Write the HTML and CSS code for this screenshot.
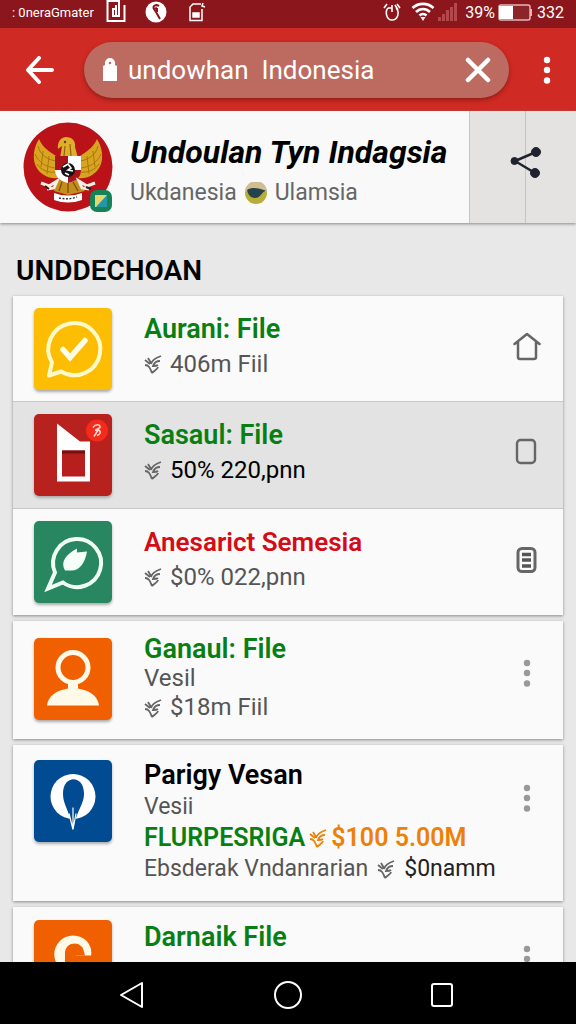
FILE: index.html
```html
<!DOCTYPE html>
<html lang="id">
<head>
<meta charset="utf-8">
<meta name="viewport" content="width=device-width, initial-scale=1">
<title>undowhan Indonesia</title>
<link rel="stylesheet" href="styles.css">
</head>
<body>
<svg class="defs" aria-hidden="true">
  <symbol id="sprig" viewBox="0 0 18 20">
    <path d="M1 6l5 4M4 4l3 5M17 2C11 4 8 6 7 10M1 11c4 0 5 3 7 8M16 7c-4 0-6 2-7 5 3 0 4 0 5-1M14 13c0 2-3 3-6 6" fill="none" stroke="currentColor" stroke-width="1.800"/>
  </symbol>
  <symbol id="dots" viewBox="0 0 8 28">
    <circle cx="4" cy="4" r="3.2"/><circle cx="4" cy="14" r="3.2"/><circle cx="4" cy="24.500" r="3.2"/>
  </symbol>
</svg>

<div class="status">
  <span class="carrier">: 0neraGmater</span>
  <svg class="status-doc" width="20" height="24" viewBox="0 0 20 24" fill="none" stroke="#fff" stroke-width="2"><path d="M12 21H1.500V1H13V16H7V9H10M18.500 5V21H12M10 5V16"/></svg>
  <svg class="status-round" width="22" height="22" viewBox="0 0 22 22"><circle cx="11" cy="11" r="10.500" fill="#fff"/><path d="M14 5c-3-2-7 0-5 3l3-1M9 8l2 3 4 7M12 7v4" fill="none" stroke="#8b161b" stroke-width="2"/></svg>
  <svg class="status-card" width="18" height="20" viewBox="0 0 18 20" fill="none" stroke="#fff" stroke-width="1.500"><path d="M14 7V18.500H2V5L5 2H13M15 1l-1 3 3 1"/><path d="M5 11h6v4H5z" fill="#fff"/></svg>
  <span class="spacer"></span>
  <svg width="18" height="20" viewBox="0 0 18 20" fill="none" stroke="#fff" stroke-width="1.600"><path d="M5 6C2 9 3 18 9 18s8-8 4-12M5 6h4M9 3v7M1 6l3-4M14 2l3 4M12 3l3 5"/></svg>
  <svg class="wifi" width="24" height="20" viewBox="0 0 24 20" fill="none" stroke="#fff" stroke-width="2.600"><path d="M1.500 6c6-5.500 15-5.500 21 0M5 10c4-4 10-4 14 0M8.500 13.500c2-2 5-2 7 0"/><path d="M9.500 15h5L12 19z" fill="#fff" stroke="none"/></svg>
  <svg width="20" height="18" viewBox="0 0 20 18" fill="#b4474b"><path d="M0 14h3v4H0zM4 11h3v7H4zM8 7h3v11H8zM12 4h3v14h-3zM16 0h3v18h-3z"/></svg>
  <span class="level">39%</span>
  <svg width="34" height="17" viewBox="0 0 34 17"><rect x="1" y="1" width="31" height="15" rx="2" fill="#8b2529" stroke="#e8b5b5" stroke-width="1.500"/><path d="M1 2h14v13H1z" fill="#fff"/><path d="M33 5v7" stroke="#e8b5b5" stroke-width="2"/></svg>
  <span class="clock">332</span>
</div>

<header class="appbar">
  <button class="bare" aria-label="Back"><svg width="28" height="28" viewBox="0 0 28 28" fill="none" stroke="#fff" stroke-width="4" stroke-linecap="round" stroke-linejoin="round"><path d="M13 2L2 14l11 12M3 14h23"/></svg></button>
  <form class="search">
    <svg width="16" height="24" viewBox="0 0 16 24"><path d="M3 7V5a5 5 0 0 1 10 0v2l2 1v15H1V8z" fill="#fff"/><circle cx="8" cy="5" r="1.300" fill="#bd6b60"/></svg>
    <input type="text" aria-label="Address" value="undowhan  Indonesia">
    <button type="button" class="bare" aria-label="Clear"><svg width="26" height="26" viewBox="0 0 26 26" stroke="#fff" stroke-width="4.500" stroke-linecap="round"><path d="M3 3l20 20M23 3L3 23"/></svg></button>
  </form>
  <button class="bare more" aria-label="More"><svg width="8" height="28" fill="#fff"><use href="#dots"/></svg></button>
</header>

<section class="profile">
  <div class="profile-main">
    <div class="avatar">
      <svg width="90" height="92" viewBox="0 0 90 92">
        <circle cx="45" cy="45" r="44.500" fill="#b91218"/>
        <path d="M16 17c-8 13-7 29 5 36 6 4 13 4 18 2l4-20c-6 1-9 0-13-3-6-4-11-8-14-15zM74 17c8 13 7 29-5 36-6 4-13 4-18 2l-4-20c6 1 9 0 13-3 6-4 11-8 14-15z" fill="#d9a520"/>
        <path d="M15 24c2 9 10 14 18 15M12 32c3 8 11 13 20 14M14 42c4 6 11 9 19 8M75 24c-2 9-10 14-18 15M78 32c-3 8-11 13-20 14M76 42c-4 6-11 9-19 8M20 29l-2 16M26 34l-2 18M70 29l2 16M64 34l2 18" fill="none" stroke="#a8770f" stroke-width="1"/>
        <path d="M37 36l2-12-4 3c-1-7 3-12 8-12 6 0 10 4 9 10l3 11z" fill="#dfae2c"/><circle cx="42" cy="20" r="1.200" fill="#5e3a08"/>
        <path d="M42 24l-1 10M47 22l1 12" stroke="#94640f" stroke-width="1.200"/>
        <path d="M36 57h18l8 12-17 4-14-4z" fill="#c58e1c"/><path d="M39 60l-3 9M45 60v11M50 60l5 9" stroke="#76500e" stroke-width="1.300"/>
        <path d="M32 34h26v13c0 8-5 12-13 14-8-2-13-6-13-14z" fill="#fff"/>
        <path d="M32 34h13v14H32zM45 48h13c0 8-5 11-13 13z" fill="#a91319"/>
        <circle cx="45" cy="48" r="7" fill="#171113"/><path d="M40 45l5-3 3 4-3 2 5 1M42 51l4 2" stroke="#fff" stroke-width="1.600" fill="none"/>
        <path d="M18 61l8 3 8-5-3 7-7 1M72 61l-8 3-8-5 3 7 7 1" fill="none" stroke="#f5eee5" stroke-width="3"/>
        <path d="M22 64l4 3M63 65l5 2" stroke="#222" stroke-width="2"/>
        <path d="M31 71q14 5 28 0v7q-14 5-28 0z" fill="#fff"/><path d="M36 76q9 2 18-1" stroke="#333" stroke-width="1.500" stroke-dasharray="2 1.500" fill="none"/>
      </svg>
      <svg class="badge" width="24" height="24" viewBox="0 0 24 24"><rect x="1" y="1" width="22" height="22" rx="7" fill="#16825a"/><path d="M6 6h12v12H6z" fill="#2397a5"/><path d="M6 6h12L7 18H6z" fill="#e6d76d"/></svg>
    </div>
    <div class="profile-text">
      <h1>Undoulan Tyn Indagsia</h1>
      <p>Ukdanesia <svg width="22" height="22" viewBox="0 0 22 22"><circle cx="11" cy="11" r="11" fill="#b9ad37"/><path d="M0 10a11 11 0 0 1 22 0l-5-2H5z" fill="#d0bd91"/><path d="M2 8c5-3 10-2 17 0l2 1c-4 0-5 7-11 7-5 0-7-4-8-8z" fill="#26424d"/></svg> Ulamsia</p>
    </div>
  </div>
  <div class="divider-pane"></div>
  <button class="bare share" aria-label="Share"><svg width="32" height="32" viewBox="0 0 32 32" fill="#202230" stroke="#202230"><path d="M26 5L5 14l20 12" fill="none" stroke-width="2.500"/><circle cx="26" cy="5" r="4.500"/><circle cx="4.500" cy="14" r="3.500"/><circle cx="25" cy="26" r="4.500"/></svg></button>
</section>

<main>
  <h2>UNDDECHOAN</h2>

  <div class="card">
    <article class="row">
      <svg class="tile yellow" viewBox="0 0 78 81"><path d="M15 67l3-13a26 26 0 1 1 9 9z" fill="none" stroke="#fffac8" stroke-width="4" stroke-linejoin="round"/><path d="M29 41l7 8 15-17" fill="none" stroke="#fffde6" stroke-width="5.500" stroke-linecap="round"/></svg>
      <div class="text"><h3 class="green">Aurani: File</h3><p><svg class="sprig"><use href="#sprig"/></svg>406m Fiil</p></div>
      <button class="bare action" aria-label="Home"><svg width="28" height="30" viewBox="0 0 28 30" fill="none" stroke="#666" stroke-width="2.500" stroke-linejoin="round" stroke-linecap="round"><path d="M1.500 12L14 2l12.500 10M5 10v15q0 2 2 2h14q2 0 2-2V10"/></svg></button>
    </article>
    <article class="row selected">
      <svg class="tile red" viewBox="0 0 78 81"><path d="M23 9l23 18h10v40H23z" fill="#fff"/><path d="M28 36h23v26H28z" fill="#b71f1c"/><path d="M28 36h23v3H28z" fill="#74100f"/><circle cx="63" cy="16" r="11" fill="#f52a1b"/><path d="M59 13c3-4 8-3 7 0l-5 3c6-2 7 3 2 5M60 22l5-8" stroke="#ffd9d4" stroke-width="1.500" fill="none"/></svg>
      <div class="text"><h3 class="green">Sasaul: File</h3><p class="dark"><svg class="sprig"><use href="#sprig"/></svg>50% 220,pnn</p></div>
      <button class="bare action" aria-label="Select"><svg width="28" height="30" viewBox="0 0 28 30" fill="none" stroke="#666" stroke-width="2.400"><rect x="4" y="2" width="18" height="23" rx="3.500"/></svg></button>
    </article>
    <article class="row">
      <svg class="tile green-tile" viewBox="0 0 78 81"><path d="M14 67l7-16a24 24 0 1 1 8 10z" fill="none" stroke="#f0fff4" stroke-width="4"/><path d="M31 49c-5-9 1-16 12-22v4l10-1c-2 12-8 20-17 19z" fill="#f4fff7"/></svg>
      <div class="text"><h3 class="scarlet">Anesarict Semesia</h3><p><svg class="sprig"><use href="#sprig"/></svg>$0% 022,pnn</p></div>
      <button class="bare action" aria-label="Details"><svg width="28" height="30" viewBox="0 0 28 30"><rect x="5" y="3.500" width="17" height="23" rx="4" fill="none" stroke="#666" stroke-width="3"/><path d="M9 9.500h9M9 15h9M9 21h9" stroke="#555" stroke-width="3.600"/></svg></button>
    </article>
  </div>

  <article class="card row triple">
    <svg class="tile orange" viewBox="0 0 78 81"><circle cx="39" cy="29" r="15" fill="none" stroke="#fff9e8" stroke-width="5"/><path d="M13 67c1-10 10-15 21-17v-5h10v5c11 2 20 7 21 17z" fill="#fff9e8"/></svg>
    <div class="text"><h3 class="green">Ganaul: File</h3><p>Vesil</p><p><svg class="sprig"><use href="#sprig"/></svg>$18m Fiil</p></div>
    <button class="bare action" aria-label="More"><svg width="8" height="28" fill="#999"><use href="#dots"/></svg></button>
  </article>

  <article class="card row quad">
    <svg class="tile blue" viewBox="0 0 78 81"><circle cx="39" cy="36" r="22.500" fill="#fff"/><path d="M39 70C36 50 29 45 29 33c0-19 21-19 21 0 0 12-8 17-11 37z" fill="#004b91"/><path d="M39 47v22M35 53l4 16 3-16" fill="none" stroke="#fff" stroke-width="1.200"/></svg>
    <div class="text">
      <h3>Parigy Vesan</h3><p>Vesii</p>
      <p class="promo"><span class="green">FLURPESRIGA</span><svg class="sprig"><use href="#sprig"/></svg><span>$100 5.00M</span></p>
      <p>Ebsderak Vndanrarian<svg class="sprig inset"><use href="#sprig"/></svg><span class="black">$0namm</span></p>
    </div>
    <button class="bare action" aria-label="More"><svg width="8" height="28" fill="#999"><use href="#dots"/></svg></button>
  </article>

  <article class="card row last">
    <svg class="tile orange" viewBox="0 0 78 81"><path d="M31 52c-20-14-9-37 8-37 13 0 20 11 18 20H42v15h-4V31h-7z" fill="#fff9e8"/><path d="M31 52V32q1-9 10-9 8 0 10 12h-9v17z" fill="#f06000"/></svg>
    <div class="text"><h3 class="green">Darnaik File</h3><p><svg class="sprig"><use href="#sprig"/></svg>Sarsmal</p></div>
    <button class="bare action" aria-label="More"><svg width="8" height="28" fill="#999"><use href="#dots"/></svg></button>
  </article>
</main>

<nav>
  <button class="bare" aria-label="Back"><svg width="28" height="28" viewBox="0 0 28 28"><path d="M24 2v24L3 14z"/></svg></button>
  <button class="bare" aria-label="Home"><svg width="30" height="30" viewBox="0 0 30 30"><circle cx="15" cy="15" r="13"/></svg></button>
  <button class="bare" aria-label="Recent"><svg width="24" height="26" viewBox="0 0 24 26"><rect x="2" y="2" width="20" height="22" rx="2"/></svg></button>
</nav>
</body>
</html>
```

FILE: styles.css
```css
* { box-sizing: border-box; }
body {
  margin: 0;
  height: 100vh;
  display: flex;
  flex-direction: column;
  overflow: hidden;
  background: #e8e8e8;
  color: #000;
  font-family: Roboto, "Liberation Sans", sans-serif;
}
h1, h2, h3, p { margin: 0; white-space: nowrap; }
svg { flex: none; }
.defs { display: none; }
.bare {
  display: flex;
  align-items: center;
  justify-content: center;
  padding: 0;
  border: 0;
  background: none;
}

.status {
  flex: none;
  height: 28px;
  padding: 0 12px 4px;
  display: flex;
  align-items: center;
  gap: 3px;
  background: #8b161b;
  color: #fff;
  font-size: 16px;
}
.carrier { width: 91px; font-size: 13px; white-space: nowrap; }
.status-round { margin-left: 16px; }
.status-card { margin-left: 18px; }
.spacer { flex: 1; }
.wifi { margin-left: 7px; }
.level { margin-left: 4px; }
.clock { margin-left: 2px; }

.appbar {
  flex: none;
  height: 83px;
  padding: 0 25px 0 26px;
  display: flex;
  align-items: center;
  gap: 30px;
  background: #cf2a23;
}
.search {
  flex: 1;
  min-width: 0;
  height: 56px;
  padding: 0 18px;
  display: flex;
  align-items: center;
  gap: 10px;
  border-radius: 28px;
  background: #bd6b60;
  box-shadow: 0 2px 4px #8f1e1a;
}
.search input {
  flex: 1;
  min-width: 0;
  padding: 0;
  border: 0;
  outline: 0;
  background: none;
  color: #fff;
  font: 26px Roboto, "Liberation Sans", sans-serif;
}
.more { margin-left: 4px; }

.profile {
  flex: none;
  height: 112px;
  display: flex;
  background: #e4e3e2;
  box-shadow: 0 1px 3px #888;
}
.profile-main {
  flex: 1;
  min-width: 0;
  padding: 11px 0 0 23px;
  display: flex;
  gap: 17px;
  background: #f9f9f9;
}
.avatar { position: relative; }
.badge { position: absolute; right: 0; bottom: 10px; }
.profile-text { padding-top: 9px; }
h1 { font-size: 32px; line-height: 42px; font-style: italic; font-weight: 700; }
.profile-text p {
  display: flex;
  align-items: center;
  gap: 8px;
  color: #666;
  font-size: 23px;
  line-height: 40px;
}
.divider-pane { width: 57px; border-left: 1px solid #c5c5c5; border-right: 1px solid #c5c5c5; }
.share { width: 50px; padding: 0 0 8px; }
.share svg { margin-left: -50px; }

main {
  flex: 1;
  min-height: 0;
  overflow: hidden;
  padding: 29px 13px 0;
}
h2 { padding: 0 3px; margin-bottom: 7px; font-size: 28px; line-height: 37px; font-weight: 600; }
.card {
  margin-bottom: 6px;
  background: #fafafa;
  box-shadow: 0 1px 3px #888;
}
.row {
  min-height: 107px;
  padding: 0 22px 0 21px;
  display: flex;
  align-items: center;
  gap: 32px;
}
.row:first-child { min-height: 105px; }
.card .row + .row { border-top: 1px solid #c8c8c8; }
.selected { background: #e3e3e3; }
.tile {
  width: 78px;
  height: 82px;
  border-radius: 5px;
  box-shadow: 0 2px 3px #aaa;
}
.yellow { background: #fcbd03; }
.red { background: #b8221e; }
.green-tile { background: #288760; }
.orange { background: #f06000; }
.blue { background: #004b91; }
.text { flex: 1; min-width: 0; padding-bottom: 4px; }
h3 { font-size: 27px; line-height: 34px; font-weight: 600; }
.text p {
  display: flex;
  align-items: center;
  color: #555;
  font-size: 24px;
  line-height: 36px;
}
.text .dark { color: #000; }
.text .black { color: #222; }
.green { color: #087f12; }
.scarlet { color: #d40c16; font-size: 26px; }
.sprig { width: 18px; height: 20px; margin-right: 8px; color: #666; }
.sprig.inset { margin: 0 9px; }
.action { width: 28px; padding-bottom: 4px; }

.row.triple, .row.quad { align-items: flex-start; }
.row.triple { min-height: 118px; padding-top: 14px; }
.triple .tile { margin-top: 3px; }
.triple h3, .triple .text p { line-height: 29px; }
.triple .action { padding: 24px 0 0; }
.row.quad { min-height: 156px; padding-top: 15px; }
.quad h3, .quad .text p { line-height: 31px; }
.quad .text p { font-size: 23px; }
.quad .action { padding: 24px 0 0; }
.quad .text .promo { color: #ed8108; font-size: 25px; font-weight: 600; }
.promo .sprig { margin: 0 4px; color: #ed8108; }
.last .text { padding-bottom: 12px; }

nav {
  flex: none;
  height: 62px;
  padding: 4px 122px 0 118px;
  display: flex;
  align-items: center;
  justify-content: space-between;
  background: #000;
}
nav svg { fill: none; stroke: #fff; stroke-width: 2; stroke-linejoin: round; }
```
